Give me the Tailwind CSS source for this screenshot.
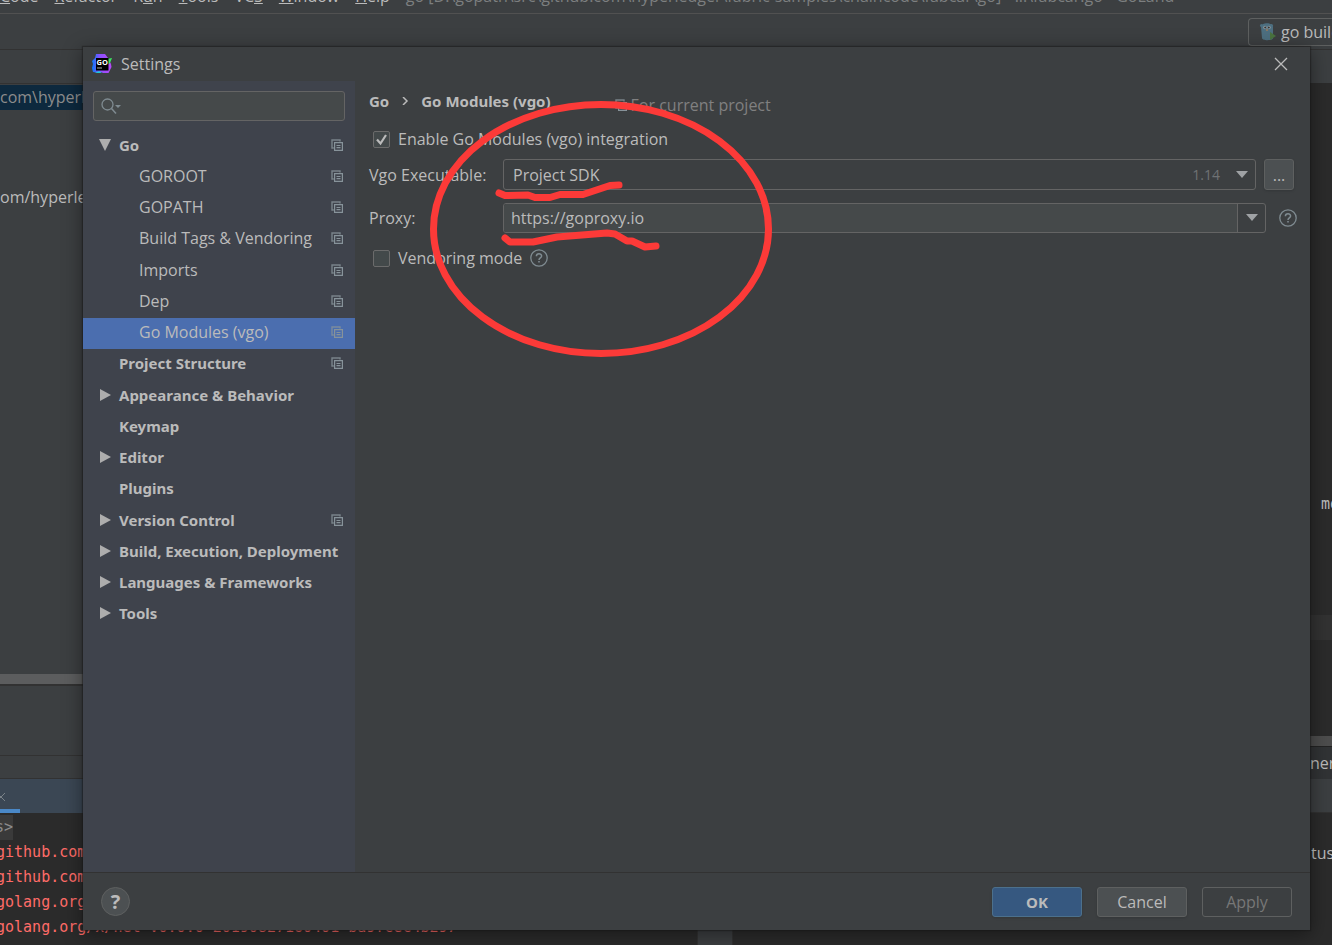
<!DOCTYPE html>
<html lang="en">
    <head>
        <meta charset="utf-8" />
        <title>Settings</title>
        <script src="https://cdn.jsdelivr.net/npm/@tailwindcss/browser@4"></script>
    </head>
    <body
        class="relative h-screen overflow-hidden bg-[#3c3f41] font-['Open_Sans',sans-serif] text-[16px] leading-6 text-[#bbbbbb]"
    >
        <svg class="hidden">
            <symbol id="copy" viewBox="0 0 12 12">
                <path d="M9 2.5V1H1V9h1.8" fill="none" stroke="currentColor" stroke-width="1.4" opacity=".8" />
                <path d="M3.6 3.6h7.800v7.800H3.600z" fill="none" stroke="currentColor" stroke-width="1.200" />
                <path d="M5.500 6.500h4M5.500 8.700h4" stroke="currentColor" stroke-width="1.200" />
            </symbol>
            <symbol id="right" viewBox="0 0 12 12">
                <path d="M1 0l11 6L1 12z" fill="currentColor" />
            </symbol>
            <symbol id="down" viewBox="0 0 12 12">
                <path d="M0 0h12L6 12z" fill="currentColor" />
            </symbol>
            <symbol id="arrow" viewBox="0 0 12 7">
                <path d="M0 0h12L6 7z" fill="currentColor" />
            </symbol>
            <symbol id="help" viewBox="0 0 18 18">
                <circle cx="9" cy="9" r="8.2" fill="none" stroke="currentColor" stroke-width="1.3" />
                <path d="M6.4 7.2C6.4 3.9 11.6 4 11.6 7c0 1.9-2.6 2-2.6 4" fill="none" stroke="currentColor" stroke-width="1.5" />
                <path d="M8.2 12h1.6v1.6H8.2z" fill="currentColor" />
            </symbol>
        </svg>

        <!-- IDE window -->
        <div class="flex h-full flex-col whitespace-nowrap">
            <div class="flex h-[14px] items-end gap-4 overflow-hidden border-b border-[#515151] pb-[5px]">
                <span><u>C</u>ode</span>
                <span><u>R</u>efactor</span>
                <span>R<u>u</u>n</span>
                <span><u>T</u>ools</span>
                <span>VC<u>S</u></span>
                <span><u>W</u>indow</span>
                <span><u>H</u>elp</span>
                <span class="text-[#7d7f80]"
                    >go [D:\gopath\src\github.com\hyperledger\fabric-samples\chaincode\fabcar\go] - ...\fabcar.go - GoLand</span
                >
            </div>
            <div class="flex h-9 items-center justify-end overflow-hidden border-b border-[#323232]">
                <button
                    class="flex h-7 w-[84px] shrink-0 items-center gap-1 overflow-hidden rounded-l border border-r-0 border-[#5e6060] pl-2"
                >
                    <svg class="h-5 w-5 shrink-0" viewBox="0 0 20 20">
                        <path d="M4 5c0-5 12-5 12 0v11c0 3-11 3-11 0z" fill="#4d6f80" />
                        <circle cx="4.5" cy="3.5" r="1.5" fill="#4d6f80" />
                        <circle cx="14.5" cy="3.5" r="1.5" fill="#4d6f80" />
                        <circle cx="8" cy="5.5" r="1.7" fill="#929ca1" />
                        <circle cx="12" cy="5.5" r="1.7" fill="#929ca1" />
                        <circle cx="8.200" cy="5.5" r="1" fill="#333" />
                        <circle cx="11.800" cy="5.5" r="1" fill="#333" />
                        <path d="M9 7h2v2H9z" fill="#8a7763" />
                        <path d="M13 10l6 4-6 4z" fill="#49733f" />
                    </svg>
                    go build
                </button>
            </div>
            <div class="flex min-h-0 flex-1">
                <div class="flex flex-1 flex-col overflow-hidden">
                    <div class="h-[34px] border-b border-[#323232]"></div>
                    <div class="mt-px h-[25px] bg-[#0d293e] text-[#8c8c8c]">com\hyperledger</div>
                    <div class="mt-[75px] flex-1">om/hyperledger</div>
                    <div class="h-3 border-b-2 border-[#323232] bg-[#5c5d5e]"></div>
                    <div class="h-[70px] border-b border-[#323232]"></div>
                    <div class="h-[23px] border-b border-[#323232]"></div>
                    <div class="flex h-[34px] flex-col justify-between bg-[#3b4754]">
                        <svg class="mt-[14px] h-2 w-2" viewBox="0 0 8 8">
                            <path d="M5 0L1 4l4 4M0 3l1 1-1 1" fill="none" stroke="#7a8288" />
                        </svg>
                        <div class="h-1 w-5 bg-[#4a88c7]"></div>
                    </div>
                    <div
                        class="h-[132px] bg-[#2b2b2b] pt-[2px] font-['DejaVu_Sans_Mono',monospace] text-[15px] leading-[25px] text-[#ff6b68]"
                    >
                        <div class="w-[13px] overflow-hidden bg-[#3a3a3a] text-[#8c8c8c]">
                            <div class="flex w-full justify-end">s&gt;</div>
                        </div>
                        <div class="-ml-1">
                            <div>github.com/hyperledger</div>
                            <div>github.com/golang/protobuf</div>
                            <div>golang.org/x/crypto</div>
                            <div>golang.org/x/net v0.0.0-20190827160401-ba9fcec4b297</div>
                        </div>
                    </div>
                </div>
                <div class="w-9 border-x border-[#323232] bg-[#3c3f41]"></div>
                <div class="flex w-[45%] flex-col bg-[#2b2b2b]">
                    <div class="h-[33px] bg-[#3c3f41]"></div>
                    <div class="flex flex-1 items-end justify-end pb-[99px]">
                        <div class="w-[11px] overflow-hidden font-['DejaVu_Sans_Mono',monospace] text-[15px]">mod</div>
                    </div>
                    <div class="h-[25px] bg-[#323232]"></div>
                    <div class="h-24"></div>
                    <div class="h-[11px] border-b border-[#232323] bg-[#4d4d4d]"></div>
                    <div class="flex h-8 items-center justify-end bg-[#313335]">
                        <div class="w-[22px] overflow-hidden">ner</div>
                    </div>
                    <div class="h-[34px] border-b border-[#323232] bg-[#3c3f41]"></div>
                    <div class="flex h-[132px] justify-end pt-7">
                        <div class="w-[21px] overflow-hidden">tus</div>
                    </div>
                </div>
            </div>
        </div>

        <!-- Settings dialog -->
        <div
            class="absolute top-[47px] right-[22px] bottom-[15px] left-[83px] flex flex-col bg-[#3c3f41] shadow-[0_4px_18px_1px_rgba(0,0,0,0.4),0_0_1px_1px_rgba(30,30,30,0.5)]"
        >
            <div class="flex h-[34px] shrink-0 items-center pr-[22px] pl-[9px]">
                <svg class="h-5 w-5" viewBox="0 0 20 20">
                    <defs>
                        <linearGradient id="logo" x1="0" y1="0" x2="1" y2="0">
                            <stop offset="0" stop-color="#087cfa" />
                            <stop offset=".4" stop-color="#8a50ff" />
                            <stop offset="1" stop-color="#b74af7" />
                        </linearGradient>
                    </defs>
                    <path d="M4 0h9l3 4 3 6 .5 3-3 6H11l-2-1-2 1-6-1-1-4 1-4-1-3 3-3z" fill="url(#logo)" />
                    <path d="M15 5l5-1-2 5-3 2z" fill="#3bea62" />
                    <path d="M3 19l4-2 3 2z" fill="#1cc8d8" />
                    <path d="M4 4h12.500v12.500H4z" fill="#000" />
                    <text x="4.500" y="10.500" font-size="7.500" font-weight="bold" font-family="Open Sans" fill="#fff">GO</text>
                    <path d="M5 14h5" stroke="#aaa" />
                </svg>
                <h1 class="ml-[9px] flex-1">Settings</h1>
                <button aria-label="Close">
                    <svg class="h-[14px] w-[14px]" viewBox="0 0 14 14">
                        <path d="M1 1l12 12M13 1L1 13" stroke="#bbb" stroke-width="1.300" />
                    </svg>
                </button>
            </div>

            <div class="flex min-h-0 flex-1">
                <nav class="w-[272px] shrink-0 bg-[#3f434c]">
                    <label class="mx-[10px] mt-[10px] mb-[9px] flex h-[30px] items-center rounded-[3px] border border-[#646464] bg-[#45494a] px-[7px]">
                        <svg class="h-4 w-5 shrink-0" viewBox="0 0 20 16">
                            <circle cx="6.500" cy="6.500" r="5.500" fill="none" stroke="#7f8b91" stroke-width="1.300" />
                            <path d="M10.500 10.500l4.500 5" stroke="#7f8b91" stroke-width="1.500" />
                            <path d="M14 7h6l-3 3z" fill="#7f8b91" />
                        </svg>
                        <input class="min-w-0 flex-1 bg-transparent outline-none" type="text" aria-label="Search settings" />
                    </label>
                    <ul class="grid h-[500px] grid-rows-[repeat(16,1fr)] whitespace-nowrap *:flex *:items-center *:pr-3 *:pb-[2px] *:pl-4">
                        <li class="font-['Noto_Sans',sans-serif] text-[15px] font-bold">
                            <svg class="mr-2 h-3 w-3 text-[#adadad]"><use href="#down" /></svg>
                            <a href="#" class="flex-1">Go</a>
                            <svg class="h-3 w-3 text-[#87939a]"><use href="#copy" /></svg>
                        </li>
                        <li>
                            <a href="#" class="ml-10 flex-1">GOROOT</a>
                            <svg class="h-3 w-3 text-[#87939a]"><use href="#copy" /></svg>
                        </li>
                        <li>
                            <a href="#" class="ml-10 flex-1">GOPATH</a>
                            <svg class="h-3 w-3 text-[#87939a]"><use href="#copy" /></svg>
                        </li>
                        <li>
                            <a href="#" class="ml-10 flex-1">Build Tags &amp; Vendoring</a>
                            <svg class="h-3 w-3 text-[#87939a]"><use href="#copy" /></svg>
                        </li>
                        <li>
                            <a href="#" class="ml-10 flex-1">Imports</a>
                            <svg class="h-3 w-3 text-[#87939a]"><use href="#copy" /></svg>
                        </li>
                        <li>
                            <a href="#" class="ml-10 flex-1">Dep</a>
                            <svg class="h-3 w-3 text-[#87939a]"><use href="#copy" /></svg>
                        </li>
                        <li class="bg-[#4b6eaf]">
                            <a href="#" class="ml-10 flex-1">Go Modules (vgo)</a>
                            <svg class="h-3 w-3 text-[#87939a]"><use href="#copy" /></svg>
                        </li>
                        <li class="font-['Noto_Sans',sans-serif] text-[15px] font-bold">
                            <a href="#" class="ml-5 flex-1">Project Structure</a>
                            <svg class="h-3 w-3 text-[#87939a]"><use href="#copy" /></svg>
                        </li>
                        <li class="font-['Noto_Sans',sans-serif] text-[15px] font-bold">
                            <svg class="mr-2 h-3 w-3 text-[#adadad]"><use href="#right" /></svg>
                            <a href="#">Appearance &amp; Behavior</a>
                        </li>
                        <li class="font-['Noto_Sans',sans-serif] text-[15px] font-bold"><a href="#" class="ml-5">Keymap</a></li>
                        <li class="font-['Noto_Sans',sans-serif] text-[15px] font-bold">
                            <svg class="mr-2 h-3 w-3 text-[#adadad]"><use href="#right" /></svg>
                            <a href="#">Editor</a>
                        </li>
                        <li class="font-['Noto_Sans',sans-serif] text-[15px] font-bold"><a href="#" class="ml-5">Plugins</a></li>
                        <li class="font-['Noto_Sans',sans-serif] text-[15px] font-bold">
                            <svg class="mr-2 h-3 w-3 text-[#adadad]"><use href="#right" /></svg>
                            <a href="#" class="flex-1">Version Control</a>
                            <svg class="h-3 w-3 text-[#87939a]"><use href="#copy" /></svg>
                        </li>
                        <li class="font-['Noto_Sans',sans-serif] text-[15px] font-bold">
                            <svg class="mr-2 h-3 w-3 shrink-0 text-[#adadad]"><use href="#right" /></svg>
                            <a href="#">Build, Execution, Deployment</a>
                        </li>
                        <li class="font-['Noto_Sans',sans-serif] text-[15px] font-bold">
                            <svg class="mr-2 h-3 w-3 text-[#adadad]"><use href="#right" /></svg>
                            <a href="#">Languages &amp; Frameworks</a>
                        </li>
                        <li class="font-['Noto_Sans',sans-serif] text-[15px] font-bold">
                            <svg class="mr-2 h-3 w-3 text-[#adadad]"><use href="#right" /></svg>
                            <a href="#">Tools</a>
                        </li>
                    </ul>
                </nav>

                <main class="min-w-0 flex-1 pt-1 pr-[13px] pl-[14px]">
                    <div class="flex items-center">
                        <h2 class="flex items-center gap-3 font-['Noto_Sans',sans-serif] text-[15px] font-bold">
                            Go
                            <svg class="h-2 w-2" viewBox="0 0 8 8">
                                <path d="M2 0l4 4-4 4" fill="none" stroke="#bbb" stroke-width="1.500" />
                            </svg>
                            Go Modules (vgo)
                        </h2>
                        <svg class="mt-2 ml-16 h-3 w-3 text-[#87939a]"><use href="#copy" /></svg>
                        <span class="mt-2 ml-1 text-[#808080]">For current project</span>
                    </div>
                    <div class="mt-[10px] flex items-center gap-2 pl-1">
                        <span class="relative flex">
                            <input
                                id="enable"
                                type="checkbox"
                                checked
                                class="peer h-[17px] w-[17px] appearance-none rounded-[2px] border border-[#6b6b6b] bg-[#43494a]"
                            />
                            <svg class="pointer-events-none absolute top-0 left-0 hidden h-[17px] w-[17px] peer-checked:block" viewBox="0 0 17 17">
                                <path d="M4 8.500l3.500 4L13 4" fill="none" stroke="#bbb" stroke-width="2.200" />
                            </svg>
                        </span>
                        <label for="enable">Enable Go Modules (vgo) integration</label>
                    </div>
                    <div class="mt-2 mr-[3px] flex h-[31px] items-center">
                        <label for="sdk" class="w-[134px]">Vgo Executable:</label>
                        <div class="relative h-full flex-1">
                            <select id="sdk" class="h-full w-full appearance-none rounded-[3px] border border-[#646464] bg-[#3c3f41] pl-[9px]">
                                <option>Project SDK</option>
                            </select>
                            <span class="pointer-events-none absolute inset-y-0 right-2 flex items-center gap-4 text-[14px] text-[#6f7274]">
                                1.14
                                <svg class="h-[7px] w-3 text-[#9fa2a5]"><use href="#arrow" /></svg>
                            </span>
                        </div>
                        <button class="ml-2 h-full w-[30px] rounded-[3px] border border-[#5e6060] bg-[#4c5052] shadow-sm">...</button>
                    </div>
                    <div class="mt-3 flex h-[31px] items-center">
                        <label for="proxy" class="w-[134px]">Proxy:</label>
                        <div class="flex h-[30px] flex-1 rounded-[3px] border border-[#646464]">
                            <input
                                id="proxy"
                                type="text"
                                value="https://goproxy.io"
                                class="min-w-0 flex-1 rounded-l-[2px] bg-[#45494a] px-[7px] outline-none"
                            />
                            <button class="flex w-7 items-center justify-center border-l border-[#646464]" aria-label="Show proxies">
                                <svg class="h-[7px] w-3 text-[#9fa2a5]"><use href="#arrow" /></svg>
                            </button>
                        </div>
                        <button class="ml-[13px]" aria-label="Proxy help">
                            <svg class="h-[18px] w-[18px] text-[#7f8b91]"><use href="#help" /></svg>
                        </button>
                    </div>
                    <div class="mt-[13px] flex items-center gap-2 pl-1">
                        <input
                            id="vendoring"
                            type="checkbox"
                            class="h-[17px] w-[17px] appearance-none rounded-[2px] border border-[#6b6b6b] bg-[#43494a]"
                        />
                        <label for="vendoring">Vendoring mode</label>
                        <button aria-label="Vendoring help">
                            <svg class="h-[18px] w-[18px] text-[#7f8b91]"><use href="#help" /></svg>
                        </button>
                    </div>
                </main>
            </div>

            <div class="flex h-[58px] shrink-0 items-center gap-[15px] border-t border-[#323232] px-[18px]">
                <button
                    class="mr-auto h-[29px] w-[29px] rounded-full border border-[#5e6060] bg-[#4c5052] text-xl leading-6 font-bold"
                >
                    ?
                </button>
                <button class="h-[30px] w-[90px] rounded-[3px] border border-[#4c708c] bg-[#365880] font-['Noto_Sans',sans-serif] text-[15px] font-bold shadow-sm">OK</button>
                <button class="h-[30px] w-[90px] rounded-[3px] border border-[#5e6060] bg-[#4c5052] shadow-sm">Cancel</button>
                <button class="h-[30px] w-[90px] rounded-[3px] border border-[#5e6060] text-[#777777]" disabled>Apply</button>
            </div>
        </div>

        <!-- Red pen marks over the dialog -->
        <svg
            class="pointer-events-none absolute top-0 left-0 h-full w-full"
            fill="none"
            stroke="#fc3a38"
            stroke-width="7"
            stroke-linecap="round"
            stroke-linejoin="round"
        >
            <ellipse cx="601" cy="229" rx="167.500" ry="124.500" />
            <path d="M499 193l6 2.500 23-.5 7 2.500h15l10-3h23l27-9 9-.5" />
            <path d="M505 238l5 4h23l24-5 50-4 8 1 12 7h5l13 6 11-1" />
        </svg>
    </body>
</html>
